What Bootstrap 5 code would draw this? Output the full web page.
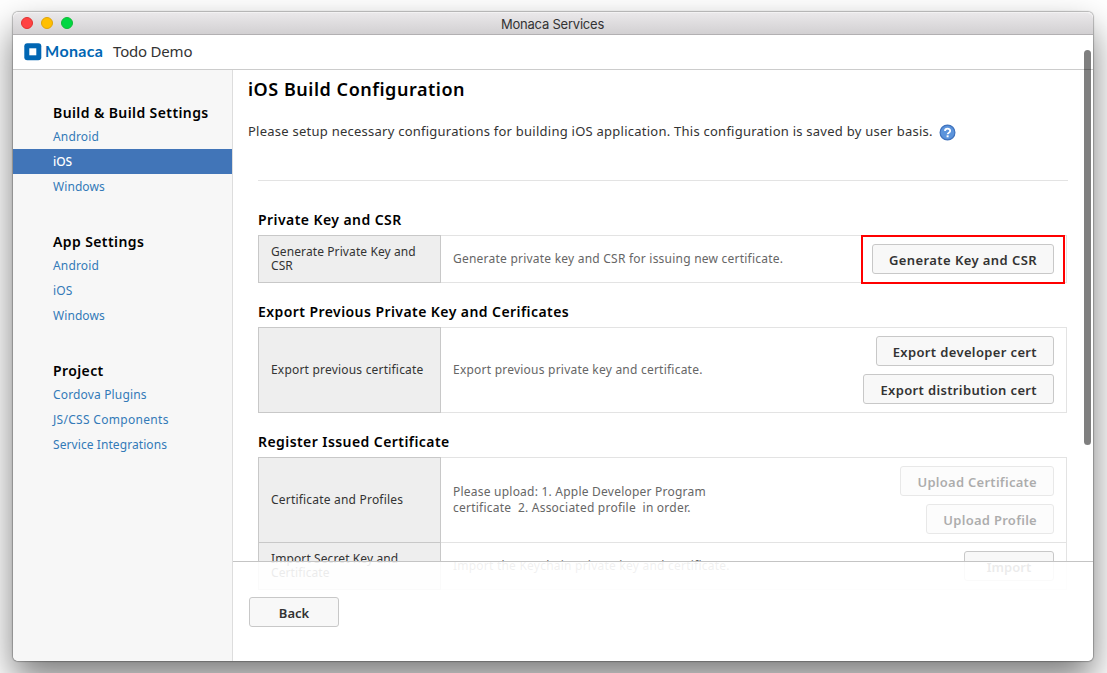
<!DOCTYPE html>
<html lang="en">
<head>
<meta charset="utf-8">
<meta name="viewport" content="width=device-width, initial-scale=1">
<title>Monaca Services</title>
<link href="https://cdn.jsdelivr.net/npm/bootstrap@5.3.0/dist/css/bootstrap.min.css" rel="stylesheet">
<style>
body{height:673px;padding:12px 14px 12px 13px;font-family:"Noto Sans",sans-serif;font-size:12px;color:#333;letter-spacing:.22px;background:#fff}
.window{height:649px;border-radius:5px;background:#fff;box-shadow:0 0 1px 1px rgba(0,0,0,.25),0 18px 36px rgba(0,0,0,.52)}
.titlebar{height:23px;padding-left:8px;background:linear-gradient(#ebe9eb,#d2d0d2);border-bottom:1px solid #b2b0b2;box-shadow:inset 0 1px #f3f2f3;font:400 13px/22px Inter,sans-serif;letter-spacing:-.22px;gap:8px}
.window-title{padding:2px 1px 0 0}
.light{width:12px;height:12px;border-radius:50%;border:1px solid}
.light-red{background:#ff4243;border-color:#e2302f}
.light-yellow{background:#ffbf00;border-color:#e0a408}
.light-green{background:#00d742;border-color:#10bb36}
.appbar{height:35px;padding:0 11px 1px;border-bottom:1px solid #ccc}
.brand{font:700 16px/20px Lato,sans-serif;letter-spacing:.28px;color:#0066b3;margin:-2px 0 0 3px}
.brand-m{font-size:15px}
.project{font-size:15px;letter-spacing:-.2px;margin-left:10px}
.sidebar{width:220px;background:#f7f7f7;border-right:1px solid #ddd;padding-top:31px}
.sidebar h2{font-size:14px;line-height:23px;font-weight:600;letter-spacing:.4px;color:#000;margin:0;padding-left:40px}
.sidebar .nav{margin-bottom:31px}
.sidebar .nav-link{height:25px;line-height:25px;padding:0 0 0 40px;color:#337ab7;letter-spacing:.16px}
.sidebar .nav-link.active{background:#4175b8;color:#fff;font-weight:500;letter-spacing:-.1px}
.sidebar .nav-link.wider{letter-spacing:.3px}
.sidebar .nav-link.tighter{letter-spacing:.08px}
.content{padding:0 26px 0 15px}
.content h1{font-size:18px;line-height:24px;font-weight:600;letter-spacing:.53px;color:#000;margin:7px 0 0}
.intro{font-size:13px;line-height:20px;letter-spacing:.245px;margin:19px 0 0}
.help-icon{margin:4px 0 0 5px}
.sections{margin-left:10px}
.divider{height:1px;background:#e3e3e3;margin:38px -1px 29px 0}
.sections h3{font-size:14px;line-height:20px;font-weight:600;letter-spacing:.43px;color:#000;margin:0 0 5px}
.settings{width:809px;border:1px solid #e3e3e3;border-left:0;margin-bottom:19px}
.setting + .setting{border-top:1px solid #e3e3e3}
.setting-name{width:183px;background:#eee;border:1px solid #c8c8c8;margin:-1px 0;padding-left:12px;line-height:14px;letter-spacing:.2px}
.name-tight{letter-spacing:.1px}
.setting-text{padding-left:12px;color:#666;line-height:16px;letter-spacing:.225px;white-space:pre}
.actions{padding:8px 12px 8px 0;gap:8px}
.act{height:30px;padding:2px 16px 0;border:1px solid #c8c8c8;border-radius:3px;background:#f8f8f8;color:#333;font-size:13px;line-height:27px;font-weight:600;letter-spacing:.36px}
.act-wide{letter-spacing:.42px}
.act:disabled{opacity:.4;border-color:#c8c8c8;background:#f8f8f8;color:#333;letter-spacing:.27px}
.act-short{width:90px;letter-spacing:0;padding:2px 0 0}
.highlight{right:1px;top:-1px;width:204px;height:49px;border:2px solid #f00}
.footer-bar{height:100px;background:rgba(255,255,255,.9);border-top:1px solid #c4c4c4;padding:35px 0 0 16px;border-radius:0 0 5px 0}
.scroll-thumb{right:2px;top:38px;width:7px;height:395px;border-radius:4px;background:rgba(0,0,0,.5)}
</style>
</head>
<body class="overflow-hidden">
<div class="window position-relative d-flex flex-column">
  <header class="titlebar d-flex align-items-center position-relative rounded-top">
    <span class="light light-red"></span><span class="light light-yellow"></span><span class="light light-green"></span>
    <span class="window-title position-absolute start-0 end-0 text-center">Monaca Services</span>
  </header>
  <div class="appbar d-flex align-items-center flex-shrink-0">
    <svg width="18" height="18" viewBox="0 0 18 18"><rect x=".3" y=".3" width="17" height="17" rx="3" fill="#0066b3"/><rect x="5.3" y="5.3" width="7" height="7" fill="#fff"/></svg>
    <span class="brand"><span class="brand-m">M</span>onaca</span>
    <span class="project">Todo Demo</span>
  </div>
  <div class="d-flex flex-grow-1 overflow-hidden rounded-bottom">
    <aside class="sidebar flex-shrink-0">
      <h2>Build &amp; Build Settings</h2>
      <nav class="nav flex-column">
        <a class="nav-link" href="#">Android</a>
        <a class="nav-link active" href="#">iOS</a>
        <a class="nav-link tighter" href="#">Windows</a>
      </nav>
      <h2>App Settings</h2>
      <nav class="nav flex-column">
        <a class="nav-link" href="#">Android</a>
        <a class="nav-link" href="#">iOS</a>
        <a class="nav-link tighter" href="#">Windows</a>
      </nav>
      <h2>Project</h2>
      <nav class="nav flex-column">
        <a class="nav-link" href="#">Cordova Plugins</a>
        <a class="nav-link wider" href="#">JS/CSS Components</a>
        <a class="nav-link tighter" href="#">Service Integrations</a>
      </nav>
    </aside>
    <div class="flex-grow-1 position-relative">
      <main class="content">
        <h1>iOS Build Configuration</h1>
        <p class="intro d-flex align-items-center">Please setup necessary configurations for building iOS application. This configuration is saved by user basis.
          <svg class="help-icon" width="18" height="18" viewBox="0 0 18 18"><circle cx="9.5" cy="8.5" r="7.4" fill="#5c94dc" stroke="#3f72bd" stroke-width="1.2"/><path d="M7 7.1C7 3.9 12.2 4 12.2 6.9 12.2 8.7 9.6 8.6 9.6 10.3" fill="none" stroke="#fff" stroke-width="1.8"/><rect x="8.6" y="11.3" width="2" height="2" fill="#fff"/></svg>
        </p>
        <div class="sections">
          <div class="divider"></div>
          <h3>Private Key and CSR</h3>
          <div class="settings position-relative">
            <div class="setting d-flex">
              <div class="setting-name name-tight d-flex align-items-center"><span>Generate Private Key and<br>CSR</span></div>
              <div class="setting-text d-flex align-items-center">Generate private key and CSR for issuing new certificate.</div>
              <div class="actions d-flex flex-column align-items-end ms-auto"><button class="btn act act-wide">Generate Key and CSR</button></div>
            </div>
            <div class="highlight position-absolute"></div>
          </div>
          <h3>Export Previous Private Key and Cerificates</h3>
          <div class="settings">
            <div class="setting d-flex">
              <div class="setting-name d-flex align-items-center">Export previous certificate</div>
              <div class="setting-text d-flex align-items-center">Export previous private key and certificate.</div>
              <div class="actions d-flex flex-column align-items-end ms-auto"><button class="btn act">Export developer cert</button><button class="btn act">Export distribution cert</button></div>
            </div>
          </div>
          <h3>Register Issued Certificate</h3>
          <div class="settings">
            <div class="setting d-flex">
              <div class="setting-name d-flex align-items-center">Certificate and Profiles</div>
              <div class="setting-text d-flex align-items-center">Please upload: 1. Apple Developer Program
certificate  2. Associated profile  in order.</div>
              <div class="actions d-flex flex-column align-items-end ms-auto"><button class="btn act" disabled>Upload Certificate</button><button class="btn act" disabled>Upload Profile</button></div>
            </div>
            <div class="setting d-flex">
              <div class="setting-name name-tight d-flex align-items-center"><span>Import Secret Key and<br>Certificate</span></div>
              <div class="setting-text d-flex align-items-center">Import the Keychain private key and certificate.</div>
              <div class="actions d-flex flex-column align-items-end ms-auto"><button class="btn act act-short">Import</button></div>
            </div>
          </div>
        </div>
      </main>
      <footer class="footer-bar position-absolute bottom-0 start-0 end-0"><button class="btn act act-short">Back</button></footer>
    </div>
  </div>
  <div class="scroll-thumb position-absolute"></div>
</div>
<script src="https://cdn.jsdelivr.net/npm/bootstrap@5.3.0/dist/js/bootstrap.bundle.min.js"></script>
</body>
</html>
